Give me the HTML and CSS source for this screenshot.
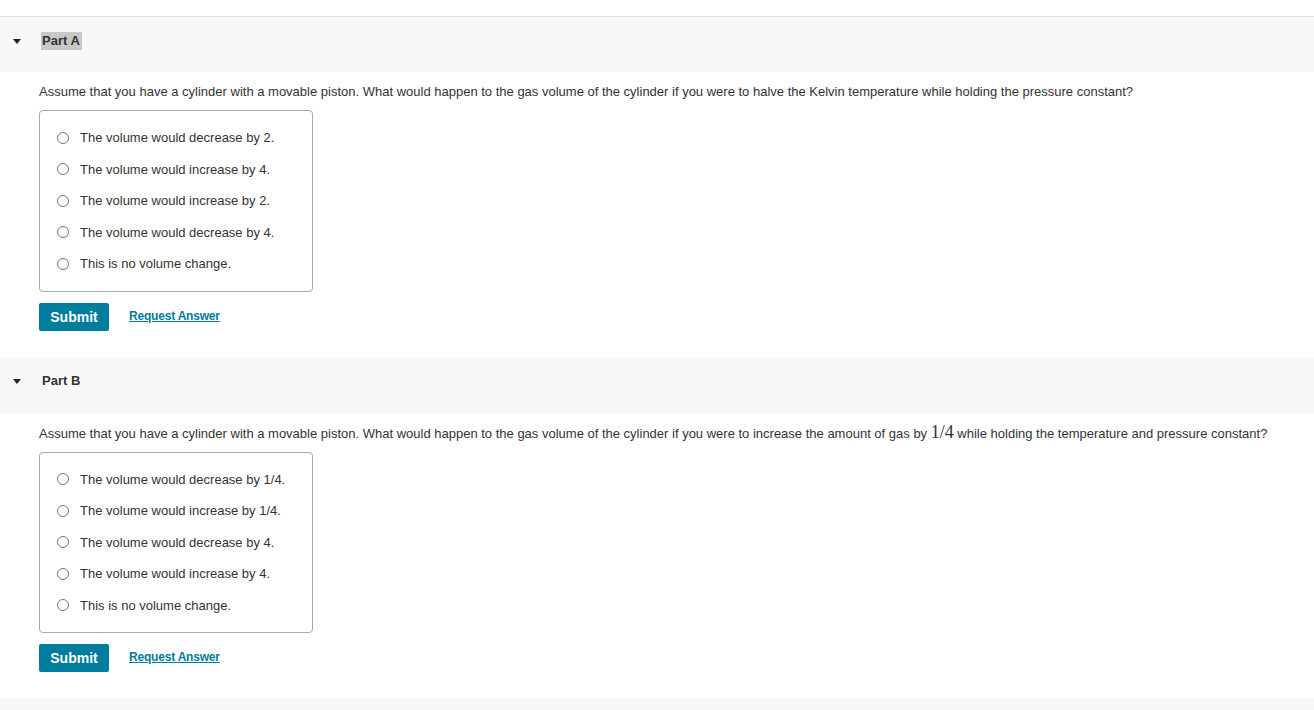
FILE: index.html
```html
<!DOCTYPE html>
<html lang="en">
<head>
  <meta charset="UTF-8">
  <title>Parts</title>
  <link rel="stylesheet" href="styles.css">
</head>
<body>
  <div class="parts">

    <!-- Part A -->
    <section class="part">
      <div class="part-header">
        <span class="caret"></span>
        <span class="part-title selected">Part A</span>
      </div>
      <div class="part-body">
        <p class="question">Assume that you have a cylinder with a movable piston. What would happen to the gas volume of the cylinder if you were to halve the Kelvin temperature while holding the pressure constant?</p>
        <div class="choices">
          <label class="choice"><input type="radio" name="a"> The volume would decrease by 2.</label>
          <label class="choice"><input type="radio" name="a"> The volume would increase by 4.</label>
          <label class="choice"><input type="radio" name="a"> The volume would increase by 2.</label>
          <label class="choice"><input type="radio" name="a"> The volume would decrease by 4.</label>
          <label class="choice"><input type="radio" name="a"> This is no volume change.</label>
        </div>
        <div class="actions">
          <button type="button" class="submit">Submit</button>
          <a href="#" class="request">Request Answer</a>
        </div>
      </div>
    </section>

    <!-- Part B -->
    <section class="part">
      <div class="part-header">
        <span class="caret"></span>
        <span class="part-title">Part B</span>
      </div>
      <div class="part-body">
        <p class="question">Assume that you have a cylinder with a movable piston. What would happen to the gas volume of the cylinder if you were to increase the amount of gas by <span class="math">1/4</span> while holding the temperature and pressure constant?</p>
        <div class="choices">
          <label class="choice"><input type="radio" name="b"> The volume would decrease by 1/4.</label>
          <label class="choice"><input type="radio" name="b"> The volume would increase by 1/4.</label>
          <label class="choice"><input type="radio" name="b"> The volume would decrease by 4.</label>
          <label class="choice"><input type="radio" name="b"> The volume would increase by 4.</label>
          <label class="choice"><input type="radio" name="b"> This is no volume change.</label>
        </div>
        <div class="actions">
          <button type="button" class="submit">Submit</button>
          <a href="#" class="request">Request Answer</a>
        </div>
      </div>
    </section>

    <div class="part-header next"></div>
  </div>
</body>
</html>
```

FILE: styles.css
```css
body {
  margin: 0;
  background: #fff;
  font-family: "Liberation Sans", Arial, sans-serif;
  color: #333;
  font-size: 13px;
}

.parts {
  padding-top: 16px;
}

.parts > .part:first-child {
  border-top: 1px solid #e2e2e2;
}

/* Collapsible header band */
.part-header {
  height: 55px;
  box-sizing: border-box;
  background: #f8f8f8;
  display: flex;
  align-items: center;
  padding: 0 0 8px 13px;
}
.part-header.next {
  margin-top: 26px;
  height: 13px;
  padding: 0;
}
.caret {
  width: 0;
  height: 0;
  border-left: 4px solid transparent;
  border-right: 4px solid transparent;
  border-top: 5px solid #222;
  margin-right: 20px;
  margin-top: 1px;
}
.part-title {
  font-size: 13px;
  font-weight: bold;
  color: #333;
  line-height: 18px;
  padding: 0 2px 0 1px;
}
.part-title.selected {
  background: #c8c8c8;
}

.part-body {
  padding-left: 39px;
}
.part + .part {
  margin-top: 27px;
}

.question {
  margin: 11px 0 10px;
  line-height: 17px;
  font-size: 13px;
}
.math {
  font-family: "Liberation Serif", "Times New Roman", serif;
  font-size: 18px;
}

/* Answer choices */
.choices {
  width: 272px;
  border: 1px solid #aaa;
  border-radius: 4px;
  padding: 11px 0;
}
.choice {
  display: flex;
  align-items: center;
  height: 31.5px;
  padding-left: 16px;
  font-size: 13px;
  color: #333;
}
.choice input {
  appearance: none;
  width: 12px;
  height: 12px;
  border: 1px solid #777;
  border-radius: 50%;
  margin: 0 11px 0 1px;
  background: #fff;
}

.actions {
  display: flex;
  align-items: center;
  margin-top: 11px;
}
.submit {
  width: 70px;
  height: 28px;
  background: #007c9c;
  color: #fff;
  border: none;
  border-radius: 2px;
  font-family: "Liberation Sans", Arial, sans-serif;
  font-size: 14px;
  font-weight: bold;
  padding: 0;
  margin-right: 20px;
}
.request {
  color: #007c9c;
  font-weight: bold;
  font-size: 12px;
  letter-spacing: -0.2px;
  margin-top: -2px;
}
```
